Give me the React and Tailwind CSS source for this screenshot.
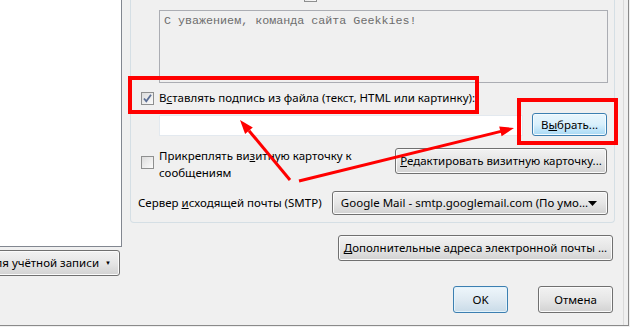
import React from 'react';

const font = { fontFamily: '"Noto Sans", "Liberation Sans", sans-serif' };

const btn =
  'flex items-center justify-center whitespace-nowrap rounded-[3px] border border-[#707070] bg-linear-to-b from-[#f2f2f2] via-[#e6e6e6] to-[#d2d2d2] text-[11.5px] text-black shadow-[inset_0_0_0_1px_#fbfbfb]';

const Checkbox = ({ checked }) => (
  <div className="flex h-[13px] w-[13px] shrink-0 items-center justify-center border border-[#8e8f8f] bg-linear-to-br from-[#dcdcdc] to-[#fbfbfb]">
    {checked && (
      <svg width="11" height="11" viewBox="0 0 11 11">
        <path d="M2 5.5 L4.3 8.3 L9 1.8" fill="none" stroke="#5b6e94" strokeWidth="1.8" />
      </svg>
    )}
  </div>
);

const Arrows = () => (
  <svg className="pointer-events-none absolute left-0 top-0" width="630" height="327">
    <line x1="290" y1="180" x2="249" y2="130.7" stroke="#ff0000" strokeWidth="3" />
    <polygon points="240,120 252.8,127.5 245.1,134" fill="#ff0000" />
    <line x1="299" y1="181" x2="501" y2="131.4" stroke="#ff0000" strokeWidth="3" />
    <polygon points="514,128 501.6,136.2 499.2,126.5" fill="#ff0000" />
  </svg>
);

export default function App() {
  return (
    <div
      className="relative h-[327px] w-[630px] overflow-hidden bg-[#f0f0f0] text-black"
      style={font}
    >
      <div className="flex h-[326px] w-[629px] border-b border-[#8a8a8a]">
        {/* left column */}
        <div className="w-[122px] shrink-0">
          <div className="h-[247px] border-r border-b border-[#828790] bg-white" />
          <div className={`${btn} -ml-[70px] mt-[3px] h-[26px] w-[190px] justify-end pr-[8px]`}>
            <span>Действия для учётной записи</span>
            <span className="ml-[6px] text-[6px]">▼</span>
          </div>
        </div>

        {/* right column */}
        <div className="ml-[8px] flex w-[485px] shrink-0 flex-col">
          <div className="h-[223px] rounded-b-[4px] border border-t-0 border-[#d5dfe5]">
            {/* clipped row above */}
            <div className="-mt-[15px] flex h-[16px] items-center whitespace-nowrap text-[11.5px] leading-[16px]">
              <span className="ml-[30px]">
                <u>Т</u>екст подписи:
              </span>
              <div className="ml-[60px] mt-[4px]">
                <Checkbox />
              </div>
              <span className="ml-[5px]">
                <u>И</u>спользовать HTML (например, &lt;b&gt;полужирный&lt;/b&gt;)
              </span>
            </div>

            <div
              className="ml-[28px] mt-[9px] h-[73px] w-[449px] border border-[#abadb3] bg-[#f0f0f0] pl-[4px] pt-[2px] text-[11.7px] leading-[16px] text-[#6d6d6d]"
              style={{ fontFamily: '"Liberation Mono", "DejaVu Sans Mono", monospace' }}
            >
              С уважением, команда сайта Geekkies!
            </div>

            <div className="mt-[5px] flex h-[20px] items-center whitespace-nowrap text-[11.5px]">
              <div className="ml-[10px]">
                <Checkbox checked />
              </div>
              <span className="ml-[5px]">
                В<u>с</u>тавлять подпись из файла (текст, HTML или картинку):
              </span>
            </div>

            <div className="mt-[5px] flex h-[23px] items-end">
              <div className="ml-[28px] h-[21px] w-[364px] border border-[#e3e9ef] bg-white" />
              <div className="ml-[9px] flex h-[23px] w-[75px] items-center justify-center rounded-[3px] border border-[#3c7fb1] bg-linear-to-b from-[#eaf6fd] via-[#d9f0fc] to-[#a7d9f5] text-[11.5px] shadow-[inset_0_0_0_1px_#f4fbfe]">
                В<u>ы</u>брать...
              </div>
            </div>

            <div className="mt-[11px] flex items-start">
              <div className="ml-[10px] mt-[9px]">
                <Checkbox />
              </div>
              <div className="ml-[5px] w-[230px] whitespace-nowrap text-[11.5px] leading-[17px]">
                Прикреплять ви<u>з</u>итную карточку к<br />сообщениям
              </div>
              <div className={`${btn} ml-auto mr-[7px] mt-[1px] h-[26px] w-[212px]`}>
                <span>
                  <u>Р</u>едактировать визитную карточку...
                </span>
              </div>
            </div>

            <div className="mt-[10px] flex items-center">
              <span className="ml-[7px] whitespace-nowrap text-[11.5px]">
                Сервер <u>и</u>сходящей почты (SMTP)
              </span>
              <div className={`${btn} ml-auto mr-[6px] h-[24px] w-[276px] justify-between overflow-hidden pl-[5px] pr-[7px]`}>
                <span>Google Mail - smtp.googlemail.com (По умо...</span>
                <svg width="9" height="5" viewBox="0 0 9 5">
                  <path d="M0 0 H9 L4.5 5 Z" fill="#000" />
                </svg>
              </div>
            </div>
          </div>

          <div className={`${btn} ml-auto mr-[2px] mt-[12px] h-[26px] w-[275px]`}>
            <span>
              <u>Д</u>ополнительные адреса электронной почты ...
            </span>
          </div>

          <div className="mr-[2px] mt-[25px] flex justify-end gap-[30px]">
            <div className="flex h-[27px] w-[55px] items-center justify-center rounded-[3px] border border-[#3c7fb1] bg-linear-to-b from-[#eef6fb] via-[#dfeaf2] to-[#c9dbe8] text-[11.5px] shadow-[inset_0_0_0_1px_#e3f3fb]">
              OK
            </div>
            <div className={`${btn} h-[27px] w-[75px]`}>Отмена</div>
          </div>
        </div>

        <div className="ml-auto w-[6px] border-l border-[#dadada] border-r border-r-[#8a8a8a]" />
      </div>

      {/* highlight annotations */}
      <div className="pointer-events-none absolute left-[128px] top-[76px] h-[38px] w-[351px] border-[4px] border-[#ff0000]" />
      <div className="pointer-events-none absolute left-[517px] top-[98px] h-[47px] w-[101px] border-[4px] border-[#ff0000]" />
      <Arrows />
    </div>
  );
}
